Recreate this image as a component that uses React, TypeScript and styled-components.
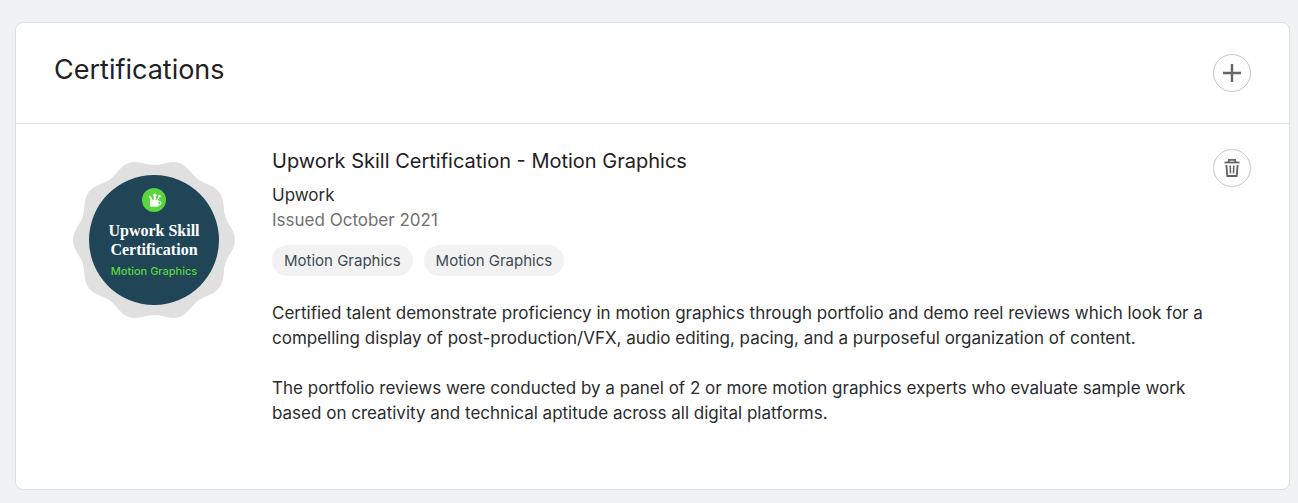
import React from "react";
import styled, { createGlobalStyle } from "styled-components";

const GlobalStyle = createGlobalStyle`
  *, *::before, *::after { box-sizing: border-box; }
  body {
    margin: 0;
    background: #f0f1f3;
    color: #1f2123;
    font-family: Inter, "Liberation Sans", sans-serif;
  }
`;

const Page = styled.main`
  padding: 22px 8px 13px 15px;
`;

const Card = styled.section`
  background: #fff;
  border: 1px solid #dcdfe1;
  border-radius: 8px;
`;

const CardHeader = styled.header`
  display: flex;
  align-items: flex-start;
  justify-content: space-between;
  padding: 31px 38px;
  border-bottom: 1px solid #dcdfe1;
`;

const Title = styled.h2`
  margin: 0;
  font-size: 27px;
  font-weight: 400;
  line-height: 32px;
`;

const IconButton = styled.button`
  display: flex;
  flex: none;
  align-items: center;
  justify-content: center;
  width: 38px;
  height: 38px;
  padding: 0;
  border: 1px solid #c6c8ca;
  border-radius: 50%;
  background: #fff;
  color: #656565;
  cursor: pointer;
`;

const Certification = styled.article`
  display: flex;
  align-items: flex-start;
  padding: 25px 38px 63px 56px;
`;

const BadgeImage = styled.svg`
  flex: none;
  width: 164px;
  height: 164px;
  margin: 9px 36px 0 0;
`;

const Details = styled.div`
  flex: 1;
  min-width: 0;
`;

const Name = styled.h3`
  margin: 0 0 9px;
  font-size: 20px;
  font-weight: 400;
  line-height: 25px;
`;

const Line = styled.p<{ $muted?: boolean }>`
  margin: 0;
  font-size: 17px;
  line-height: 25px;
  color: ${(p) => (p.$muted ? "#6f7173" : "#2a2c2e")};
`;

const Tags = styled.ul`
  display: flex;
  flex-wrap: wrap;
  gap: 11px;
  margin: 12px 0 25px;
  padding: 0;
  list-style: none;
`;

const Tag = styled.li`
  padding: 0 12px;
  border-radius: 16px;
  background: #f2f2f2;
  color: #3c4a56;
  font-size: 15px;
  line-height: 31px;
`;

const Description = styled(Line)`
  & + & {
    margin-top: 25px;
  }
`;

const sealPath = (() => {
  const points: string[] = [];
  for (let deg = 0; deg < 360; deg += 2) {
    const a = (deg * Math.PI) / 180;
    const r = 78 + 3 * Math.cos(10 * a);
    points.push(`${(82 + r * Math.cos(a)).toFixed(2)} ${(82 + r * Math.sin(a)).toFixed(2)}`);
  }
  return `M${points.join("L")}Z`;
})();

function Badge() {
  return (
    <BadgeImage viewBox="0 0 164 164" role="img" aria-label="Upwork Skill Certification badge">
      <path d={sealPath} fill="#e0e0e0" />
      <circle cx="82" cy="82" r="65" fill="#1f4557" />
      <circle cx="82" cy="42" r="12" fill="#5bd53d" />
      <path
        d="M78 42h8.500v1h1.200a1.600 1.600 0 0 1 1.600 1.600v1a1.600 1.600 0 0 1-1.600 1.600H86.500v.3a1.200 1.200 0 0 1-1.200 1.200h-6.100a1.200 1.200 0 0 1-1.200-1.200zM86.500 44v2.200h1.200a.6.6 0 0 0 .6-.6v-1a.6.6 0 0 0-.6-.6z"
        fill="#fff"
        fillRule="evenodd"
      />
      <g fill="none" stroke="#fff" strokeLinecap="round">
        <path d="M79.800 42 77.800 38.500" strokeWidth="1.700" />
        <path d="M82.800 42v-3" strokeWidth="2" />
        <path d="M85.300 42l1.600-2.600" strokeWidth="1.200" />
      </g>
      <g fill="#fff">
        <circle cx="82.800" cy="37.200" r="1.700" />
        <circle cx="87.400" cy="38.300" r="1.300" />
      </g>
      <g fill="#fff" fontFamily="'Liberation Serif', serif" fontSize="16" fontWeight="700" textAnchor="middle">
        <text x="82" y="78">Upwork Skill</text>
        <text x="82" y="97">Certification</text>
      </g>
      <text x="82" y="117" fill="#5bd53d" fontFamily="Inter, sans-serif" fontSize="11" fontWeight="500" textAnchor="middle">
        Motion Graphics
      </text>
    </BadgeImage>
  );
}

function PlusIcon() {
  return (
    <svg width="18" height="18" viewBox="0 0 18 18" fill="none" stroke="currentColor" strokeWidth="2.400" aria-hidden="true">
      <path d="M9 0v18M0 9h18" />
    </svg>
  );
}

function TrashIcon() {
  return (
    <svg width="16" height="20" viewBox="0 0 16 20" fill="none" stroke="currentColor" aria-hidden="true">
      <path d="M.5 4.500h15" strokeWidth="1.800" />
      <path d="M4.800 4V1.900h6.400V4" strokeWidth="1.800" />
      <path d="M2.400 7l.9 11h9.400L13.600 7" strokeWidth="1.900" />
      <path d="M6.200 7.500l.3 8M9.800 7.500l-.3 8" strokeWidth="1.600" />
    </svg>
  );
}

export default function App() {
  return (
    <>
      <GlobalStyle />
      <Page>
        <Card aria-labelledby="certifications-title">
          <CardHeader>
            <Title id="certifications-title">Certifications</Title>
            <IconButton type="button" aria-label="Add certification">
              <PlusIcon />
            </IconButton>
          </CardHeader>
          <Certification>
            <Badge />
            <Details>
              <Name>Upwork Skill Certification - Motion Graphics</Name>
              <Line>Upwork</Line>
              <Line $muted>Issued October 2021</Line>
              <Tags>
                <Tag>Motion Graphics</Tag>
                <Tag>Motion Graphics</Tag>
              </Tags>
              <Description>
                Certified talent demonstrate proficiency in motion graphics through portfolio and demo reel reviews
                which look for a compelling display of post-production/VFX, audio editing, pacing, and a purposeful
                organization of content.
              </Description>
              <Description>
                The portfolio reviews were conducted by a panel of 2 or more motion graphics experts who evaluate sample
                work based on creativity and technical aptitude across all digital platforms.
              </Description>
            </Details>
            <IconButton type="button" aria-label="Delete certification">
              <TrashIcon />
            </IconButton>
          </Certification>
        </Card>
      </Page>
    </>
  );
}
